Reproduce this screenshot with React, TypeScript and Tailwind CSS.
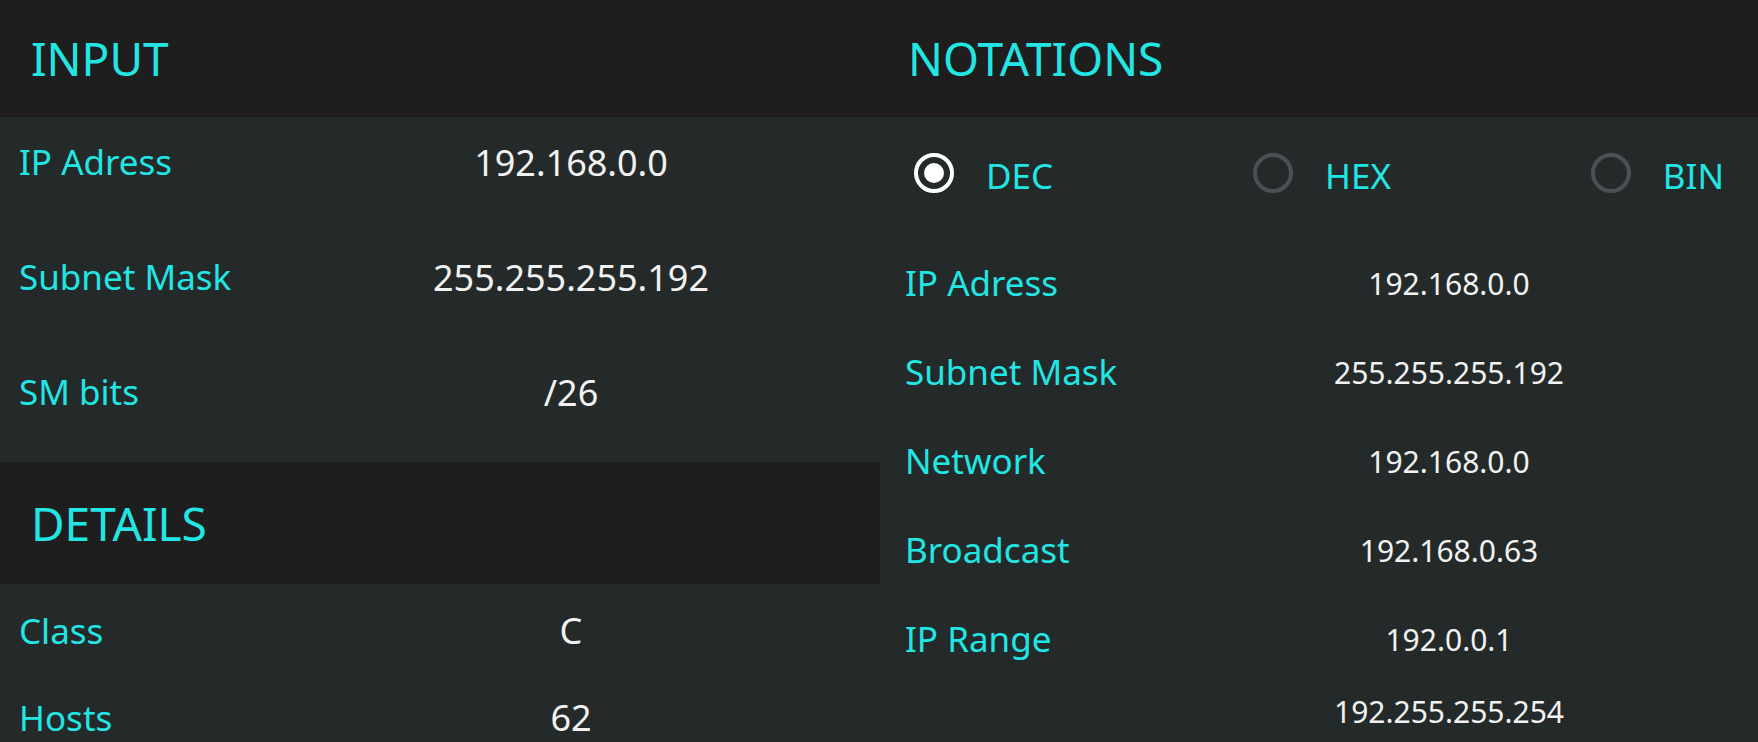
import React from "react";

const cyan = "text-[#22e6e4]";

function SectionHeader({ title, h, pl }: { title: string; h: string; pl: string }) {
  return (
    <div className={`${h} ${pl} flex shrink-0 items-center bg-[#1e1e1e] text-[46px] ${cyan}`}>
      {title}
    </div>
  );
}

function InputRow({ label, value }: { label: string; value: string }) {
  return (
    <div className="grid h-[115px] shrink-0 grid-cols-[262px_1fr] items-center pb-6">
      <span className={`pl-[19px] text-[35px] ${cyan}`}>{label}</span>
      <span className="text-center text-[36px] text-[#f2f2f2]">{value}</span>
    </div>
  );
}

function DetailRow({ label, value }: { label: string; value: string }) {
  return (
    <div className="grid h-[87px] shrink-0 grid-cols-[262px_1fr] items-center pt-[7px]">
      <span className={`pl-[19px] text-[35px] ${cyan}`}>{label}</span>
      <span className="text-center text-[36px] text-[#f2f2f2]">{value}</span>
    </div>
  );
}

function NotationRow({ label, value }: { label: string; value: string }) {
  return (
    <div className="grid h-[89px] shrink-0 grid-cols-[260px_1fr] items-center">
      <span className={`pl-[25px] text-[35px] ${cyan}`}>{label}</span>
      <span className="text-center text-[30px] text-[#f2f2f2]">{value}</span>
    </div>
  );
}

function Radio({ label, checked }: { label: string; checked?: boolean }) {
  return (
    <div className="flex items-center gap-[32px]">
      {checked ? (
        <span className="flex h-[40px] w-[40px] items-center justify-center rounded-full border-[4px] border-white">
          <span className="h-[20px] w-[20px] rounded-full bg-white" />
        </span>
      ) : (
        <span className="h-[40px] w-[40px] rounded-full border-[4px] border-[#4b5053]" />
      )}
      <span className={`pt-[6px] text-[35px] ${cyan}`}>{label}</span>
    </div>
  );
}

export default function App() {
  return (
    <div
      className="flex h-[742px] w-[1758px] overflow-hidden bg-[#242a2a] leading-normal"
      style={{ fontFamily: '"Noto Sans", "Open Sans", sans-serif' }}
    >
      {/* Left column: input + details */}
      <div className="flex w-[880px] shrink-0 flex-col">
        <SectionHeader title="INPUT" h="h-[117px]" pl="pl-[31px]" />
        <InputRow label="IP Adress" value="192.168.0.0" />
        <InputRow label="Subnet Mask" value="255.255.255.192" />
        <InputRow label="SM bits" value="/26" />
        <SectionHeader title="DETAILS" h="h-[122px]" pl="pl-[31px]" />
        <DetailRow label="Class" value="C" />
        <DetailRow label="Hosts" value="62" />
      </div>

      {/* Right column: notations */}
      <div className="flex w-[878px] shrink-0 flex-col">
        <SectionHeader title="NOTATIONS" h="h-[117px]" pl="pl-[28px]" />
        <div className="flex h-[122px] shrink-0 items-center justify-between px-[34px] pb-[10px]">
          <Radio label="DEC" checked />
          <Radio label="HEX" />
          <Radio label="BIN" />
        </div>
        <NotationRow label="IP Adress" value="192.168.0.0" />
        <NotationRow label="Subnet Mask" value="255.255.255.192" />
        <NotationRow label="Network" value="192.168.0.0" />
        <NotationRow label="Broadcast" value="192.168.0.63" />
        <NotationRow label="IP Range" value="192.0.0.1" />
        <div className="grid shrink-0 grid-cols-[260px_1fr] pt-[5px]">
          <span />
          <span className="text-center text-[30px] text-[#f2f2f2]">192.255.255.254</span>
        </div>
      </div>
    </div>
  );
}
